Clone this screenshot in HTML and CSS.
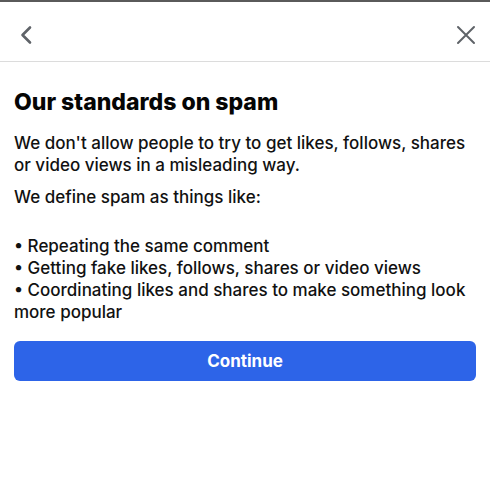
FILE: index.html
```html
<!DOCTYPE html>
<html lang="en">
<head>
<meta charset="utf-8">
<title>Our standards on spam</title>
<link rel="stylesheet" href="styles.css">
</head>
<body>
<div class="screen">
  <header class="topbar">
    <button class="icon-btn" aria-label="Back">
      <svg width="14" height="20" viewBox="0 0 14 20"><path d="M11 2.5 L3.5 10 L11 17.5" fill="none" stroke="#5f6368" stroke-width="2.6" stroke-linecap="round" stroke-linejoin="round"/></svg>
    </button>
    <button class="icon-btn" aria-label="Close">
      <svg width="20" height="20" viewBox="0 0 20 20"><path d="M2 2 L18 18 M18 2 L2 18" fill="none" stroke="#5f6368" stroke-width="2" stroke-linecap="round"/></svg>
    </button>
  </header>
  <main class="content">
    <h1 class="title">Our standards on spam</h1>
    <p class="para">We don't allow people to try to get likes, follows, shares or video views in a misleading way.</p>
    <p class="para lead">We define spam as things like:</p>
    <ul class="list">
      <li>• Repeating the same comment</li>
      <li>• Getting fake likes, follows, shares or video views</li>
      <li>• Coordinating likes and shares to make something look more popular</li>
    </ul>
    <button class="primary">Continue</button>
  </main>
</div>
</body>
</html>
```
FILE: styles.css
```css
* { box-sizing: border-box; }
html, body { margin: 0; padding: 0; background: #ffffff; }
body {
  font-family: Inter, "Liberation Sans", Arial, sans-serif;
  color: #111111;
}
.screen {
  width: 490px;
  height: 500px;
  border-top: 2px solid #5a5a5a;
  background: #fff;
}
.topbar {
  height: 60px;
  border-bottom: 1px solid #dcdcdc;
  display: flex;
  align-items: center;
  justify-content: space-between;
  padding: 0 14px 0 16px;
}
.icon-btn {
  background: none;
  border: 0;
  padding: 0;
  display: flex;
  align-items: center;
  justify-content: center;
  width: 20px;
  height: 20px;
  margin-top: 7px;
}
.content {
  padding: 0 14px;
}
.title {
  margin: 26px 0 0;
  font-size: 23px;
  line-height: 28px;
  font-weight: 800;
  color: #050505;
}
.para {
  margin: 16px 0 0;
  font-size: 17px;
  line-height: 22px;
  font-weight: 500;
}
.lead { margin-top: 10px; margin-bottom: 0; }
.list {
  list-style: none;
  margin: 27px 0 0;
  padding: 0;
  font-size: 17px;
  line-height: 22px;
  font-weight: 500;
}
.primary {
  display: block;
  width: 100%;
  height: 40px;
  margin-top: 18px;
  border: 0;
  border-radius: 6px;
  background: #2d64e8;
  color: #fff;
  font-family: inherit;
  font-size: 17px;
  font-weight: 700;
}
```
